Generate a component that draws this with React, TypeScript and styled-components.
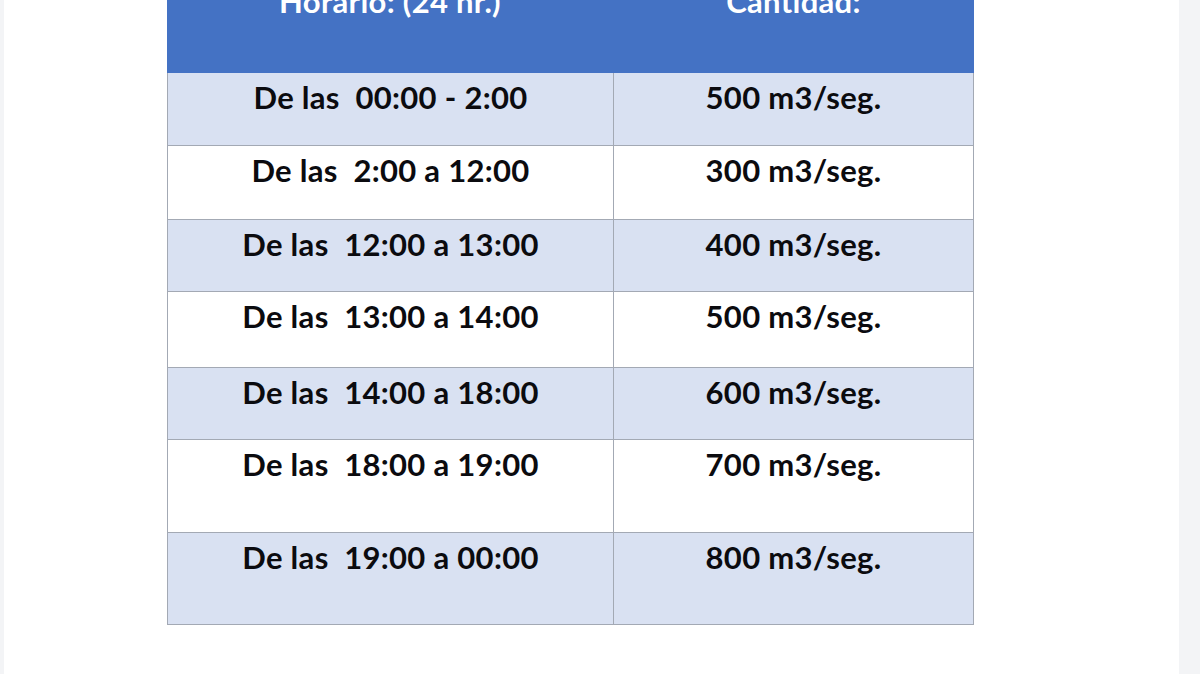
import React from "react";
import styled, { createGlobalStyle } from "styled-components";

const Global = createGlobalStyle`
  html, body { margin: 0; padding: 0; background: #ffffff; }
  body { font-family: Lato, "Open Sans", "Liberation Sans", sans-serif; overflow: hidden; }
`;

const Page = styled.div`
  display: flex;
  width: 1200px;
  height: 674px;
  overflow: hidden;
  background: #ffffff;
`;

const Strip = styled.div<{ $w: number }>`
  flex: 0 0 ${(p) => p.$w}px;
  background: #f3f4f6;
`;

const Main = styled.div`
  flex: 1;
  padding-left: 163px;
`;

const Table = styled.div`
  width: 807px;
  margin-top: -27px;
  display: flex;
  flex-direction: column;
`;

const HeaderRow = styled.div`
  display: grid;
  grid-template-columns: 446px 1fr;
  height: 100px;
  background: #4472c4;
`;

const HeadCell = styled.div`
  color: #ffffff;
  font-weight: 700;
  font-size: 31px;
  letter-spacing: 0.3px;
  line-height: 34px;
  text-align: center;
  padding-top: 11px;
`;

const Row = styled.div<{ $h: number; $shade: boolean }>`
  display: grid;
  grid-template-columns: 446px 1fr;
  height: ${(p) => p.$h}px;
  box-sizing: border-box;
  background: ${(p) => (p.$shade ? "#d9e1f2" : "#ffffff")};
  border-left: 1px solid #a3a9b4;
  border-right: 1px solid #a3a9b4;
  border-bottom: 1px solid #a3a9b4;
`;

const Cell = styled.div<{ $divider?: boolean }>`
  color: #0b0b0f;
  font-weight: 700;
  font-size: 31px;
  letter-spacing: 0.3px;
  line-height: 34px;
  text-align: center;
  padding-top: 7px;
  white-space: pre;
  border-right: ${(p) => (p.$divider ? "1px solid #a3a9b4" : "none")};
`;

const rows: { from: string; qty: string; h: number }[] = [
  { from: "De las  00:00 - 2:00", qty: "500 m3/seg.", h: 73 },
  { from: "De las  2:00 a 12:00", qty: "300 m3/seg.", h: 74 },
  { from: "De las  12:00 a 13:00", qty: "400 m3/seg.", h: 72 },
  { from: "De las  13:00 a 14:00", qty: "500 m3/seg.", h: 76 },
  { from: "De las  14:00 a 18:00", qty: "600 m3/seg.", h: 72 },
  { from: "De las  18:00 a 19:00", qty: "700 m3/seg.", h: 93 },
  { from: "De las  19:00 a 00:00", qty: "800 m3/seg.", h: 92 },
];

export default function App() {
  return (
    <>
      <Global />
      <Page>
        <Strip $w={4} />
        <Main>
          <Table>
            <HeaderRow>
              <HeadCell>Horario: (24 hr.)</HeadCell>
              <HeadCell>Cantidad:</HeadCell>
            </HeaderRow>
            {rows.map((r, i) => (
              <Row key={i} $h={r.h} $shade={i % 2 === 0}>
                <Cell $divider>{r.from}</Cell>
                <Cell>{r.qty}</Cell>
              </Row>
            ))}
          </Table>
        </Main>
        <Strip $w={21} />
      </Page>
    </>
  );
}
